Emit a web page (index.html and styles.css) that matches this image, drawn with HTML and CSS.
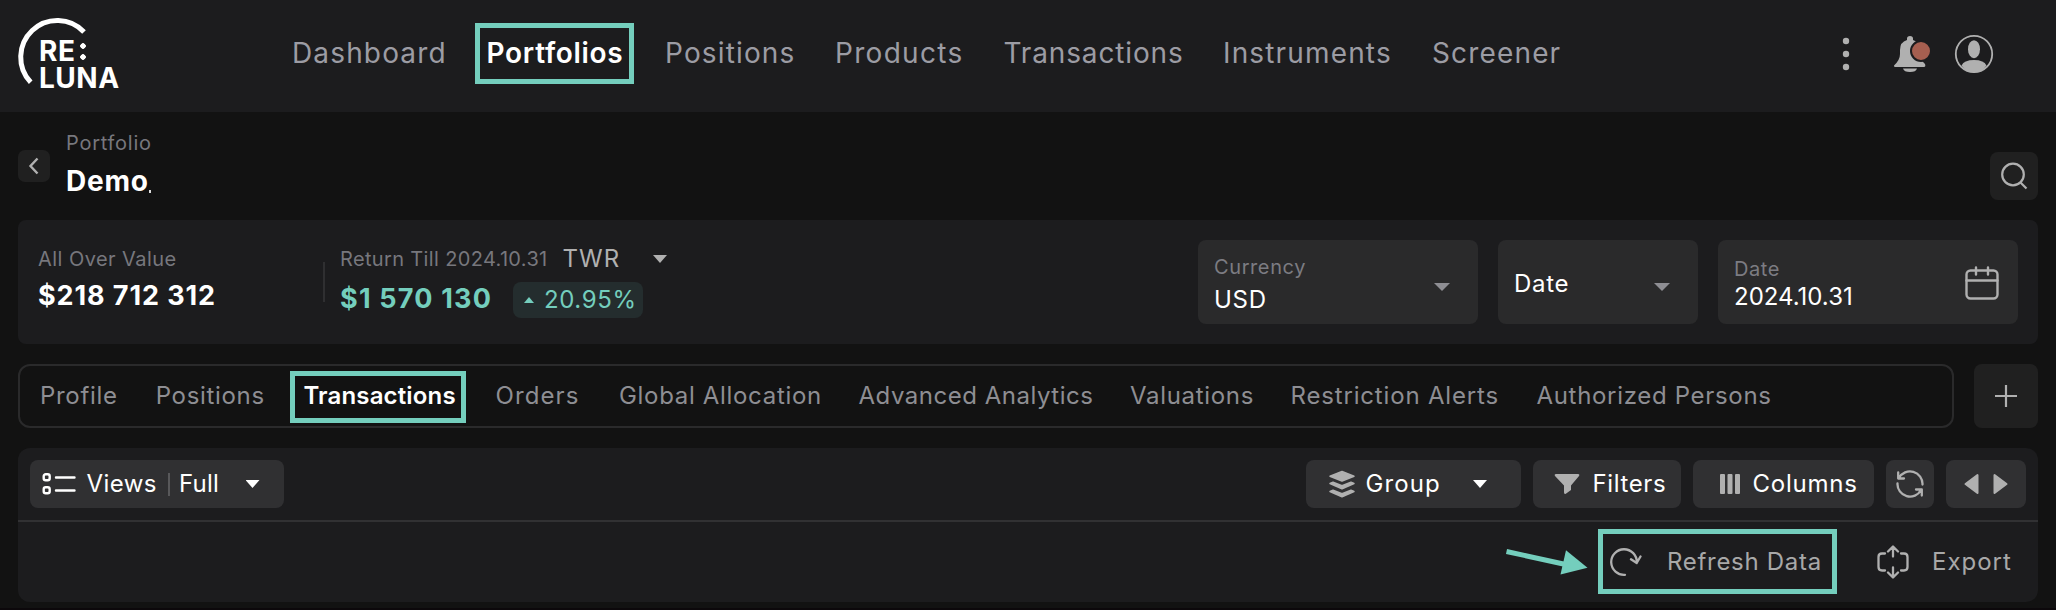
FILE: index.html
```html
<!DOCTYPE html>
<html lang="en">
<head>
<meta charset="utf-8">
<title>Portfolio transactions</title>
<link rel="stylesheet" href="styles.css">
</head>
<body>
<header class="topbar">
  <div class="logo">
    <svg class="logo-arc" width="104" height="76" viewBox="0 0 104 76" fill="none" stroke="#fff" stroke-width="5"><path d="M30.700 70.300A36.500 36.500 0 0 1 84 20"/></svg>
    <div class="logo-text"><span class="logo-re">RE<i class="colon"></i></span><span class="logo-luna">LUNA</span></div>
  </div>
  <nav class="nav">
    <a>Dashboard</a><a class="nav-active">Portfolios</a><a>Positions</a><a>Products</a><a>Transactions</a><a>Instruments</a><a>Screener</a>
  </nav>
  <div class="top-icons">
    <svg class="dots" width="8" height="36" viewBox="0 0 8 36" fill="#b0b0b0"><circle cx="4" cy="5" r="3.2"/><circle cx="4" cy="18" r="3.2"/><circle cx="4" cy="31" r="3.2"/></svg>
    <svg class="bell" width="40" height="40" viewBox="0 0 40 40"><g fill="#b0b0b0"><path d="M17 4.500Q17 2 20 2T23 4.500V6Q30 8 30 16V22Q30 25 35 30Q36 33 34 33H5Q4 33 4 31.500Q10 26 10 20V16Q10 8 17 6Z"/><path d="M13 34.500H27Q26 38 20 38T13 34.500Z"/></g><circle cx="31" cy="17" r="10" fill="#a65f50" stroke="#1c1c1e" stroke-width="2"/></svg>
    <svg class="avatar" width="40" height="40" viewBox="0 0 40 40"><circle cx="20" cy="20" r="18.200" fill="none" stroke="#b0b0b0" stroke-width="1.800"/><ellipse cx="20" cy="15.200" rx="6" ry="9" fill="#b0b0b0"/><path d="M7.500 31.500Q10 26 20 26T32.500 31.500Q28 38.500 20 38.500T7.500 31.500Z" fill="#b0b0b0"/></svg>
  </div>
</header>
<main class="page">
  <section class="heading">
    <button class="back"><svg width="14" height="18" viewBox="0 0 14 18" fill="none" stroke="#b0b0b0" stroke-width="2.400"><path d="M10.500 1.500L3.500 9L10.500 16.500"/></svg></button>
    <div class="title"><span class="crumb">Portfolio</span><h1>Demo<i class="tick"></i></h1></div>
    <button class="search"><svg width="32" height="32" viewBox="0 0 32 32" fill="none" stroke="#b0b0b0" stroke-width="2.200"><circle cx="15" cy="14.500" r="10.800"/><path d="M22.500 22.500L28.500 28.500"/></svg></button>
  </section>
  <section class="summary">
    <div class="stat stat-value"><span class="label">All Over Value</span><strong>$218 712 312</strong></div>
    <i class="stat-rule"></i>
    <div class="stat stat-return">
      <div class="row"><span class="label till">Return Till 2024.10.31</span><span class="twr">TWR</span><i class="caret caret-twr"></i></div>
      <div class="row row-money"><strong class="green">$1 570 130</strong><span class="pill"><i class="up"></i><span class="pct">20.95%</span></span></div>
    </div>
    <div class="fields">
      <div class="field currency"><div><span class="label">Currency</span><span class="val">USD</span></div><i class="caret caret-dim"></i></div>
      <div class="field kind"><span class="val">Date</span><i class="caret caret-dim"></i></div>
      <div class="field date"><div><span class="label">Date</span><span class="val">2024.10.31</span></div>
        <svg width="34" height="34" viewBox="0 0 34 34" fill="none" stroke="#b0b0b0" stroke-width="2.400" stroke-linecap="round"><rect x="1.500" y="4.500" width="31" height="28" rx="4"/><path d="M1.500 14.500H32.500M11 1.500V8.500M23 1.500V8.500"/></svg></div>
    </div>
  </section>
  <section class="tabs-row">
    <nav class="tabs"><a>Profile</a><a>Positions</a><a class="tab-active">Transactions</a><a>Orders</a><a>Global Allocation</a><a>Advanced Analytics</a><a>Valuations</a><a>Restriction Alerts</a><a>Authorized Persons</a></nav>
    <button class="add"><svg width="24" height="24" viewBox="0 0 24 24" stroke="#b0b0b0" stroke-width="2.200"><path d="M12 1V23M1 12H23"/></svg></button>
  </section>
  <section class="table-panel">
    <div class="toolbar">
      <button class="btn views"><svg width="34" height="24" viewBox="0 0 34 24" fill="none" stroke="#fff" stroke-width="2.400"><rect x="1.700" y="2.200" width="6" height="6" rx="2"/><rect x="1.700" y="15.200" width="6" height="6" rx="2"/><path d="M14 5.500H32.500M14 18.500H32.500" stroke-linecap="round"/></svg><span class="t-views">Views</span><i class="sep"></i><span class="t-full">Full</span><i class="caret"></i></button>
      <div class="tools">
        <button class="btn group"><svg width="28" height="28" viewBox="0 0 28 28" fill="#b0b0b0" stroke="#b0b0b0" stroke-width="1.500" stroke-linejoin="round"><path d="M14 1.500L26 6.300L14 11L2 6.300Z"/><path d="M2 13.500L5 12.300L14 15.800L23 12.300L26 13.500L14 18.800Z"/><path d="M2 21.500L5 20.300L14 23.800L23 20.300L26 21.500L14 26.800Z"/></svg><span class="t-group">Group</span><i class="caret"></i></button>
        <button class="btn filters"><svg width="26" height="22" viewBox="0 0 26 22" fill="#b0b0b0"><path d="M2 1H24Q26 1 25 3L17 12.500V17L11.500 21Q10 21 10 19.500V12.500L1 3Q0 1 2 1Z"/></svg><span class="t-filters">Filters</span></button>
        <button class="btn columns"><svg width="20" height="20" viewBox="0 0 20 20" fill="#b0b0b0"><rect width="5" height="20" rx="1"/><rect x="7.500" width="5" height="20" rx="1"/><rect x="15" width="5" height="20" rx="1"/></svg><span class="t-columns">Columns</span></button>
        <button class="btn sync"><svg width="30" height="28" viewBox="0 0 30 28" fill="none" stroke="#b0b0b0" stroke-width="2.300" stroke-linecap="round" stroke-linejoin="round"><path d="M3.200 2.500V8.500H9M4 8A12.500 12.500 0 0 1 27.500 14.500M26.800 25.500V19.500H21M26 20A12.500 12.500 0 0 1 2.500 13.500"/></svg></button>
        <button class="btn arrows"><svg width="44" height="22" viewBox="0 0 44 22" fill="#b0b0b0" stroke="#b0b0b0" stroke-width="2" stroke-linejoin="round"><path d="M13.500 2V20L1.500 11Z"/><path d="M30.500 2V20L42.500 11Z"/></svg></button>
      </div>
    </div>
    <div class="actions">
      <svg class="pointer" width="86" height="30" viewBox="0 0 86 30"><path d="M2.500 4.500L64 18" stroke="#74cebd" stroke-width="5"/><path d="M62 3.300L83.500 20.700L56.500 27.600Z" fill="#74cebd"/></svg>
      <a class="action refresh"><svg width="32" height="30" viewBox="0 0 32 30" fill="none" stroke="#b0b0b0" stroke-width="2.300" stroke-linecap="round" stroke-linejoin="round"><path d="M15 27.800A12.800 12.800 0 1 1 26.800 15.500M21 12.300L26.700 16L30.500 9.500"/></svg><span class="t-refresh">Refresh Data</span></a>
      <a class="action export"><svg width="32" height="34" viewBox="0 0 32 34" fill="none" stroke="#b0b0b0" stroke-width="2.300" stroke-linecap="round" stroke-linejoin="round"><path d="M8 8.500H5Q1.500 8.500 1.500 12V22Q1.500 25.500 5 25.500H8M24 8.500H27Q30.500 8.500 30.500 12V22Q30.500 25.500 27 25.500H24M16 2V11.500M11 6.500L16 1.500L21 6.500M16 32V22.500M11 27.500L16 32.500L21 27.500"/></svg><span class="t-export">Export</span></a>
    </div>
  </section>
</main>
</body>
</html>
```
FILE: styles.css
```css
*, *::after { box-sizing: border-box; }
body { margin: 0; width: 2056px; height: 610px; overflow: hidden; background: #121212; border-bottom: 2px solid #0c080b; color: #fff; font-family: Inter, "Liberation Sans", sans-serif; font-size: 24px; font-weight: 400; line-height: 32px; }
button { border: 0; padding: 0; margin: 0; background: #202020; color: inherit; font: inherit; display: flex; align-items: center; justify-content: center; }
svg { display: block; flex: none; }
i { flex: none; }
a, span, strong { white-space: nowrap; }

.topbar { height: 112px; background: #1c1c1e; display: flex; }
.logo { width: 275px; padding-top: 12px; position: relative; flex: none; }
.logo-arc { position: absolute; left: 0; top: 12px; }
.logo-text { padding: 26px 0 0 39px; display: flex; flex-direction: column; font-weight: 700; font-size: 28px; line-height: 27px; letter-spacing: .500px; }
.logo-re { display: flex; }
.colon { width: 6px; height: 17px; margin: 5px 0 0 5px; background: radial-gradient(circle at 3px 3px, #fff 2.500px, transparent 3px) 0 0 / 6px 11px; }
.nav { display: flex; align-items: center; height: 105px; gap: 41px; padding-left: 17px; font-size: 28px; letter-spacing: 1.150px; color: #9c9ca4; }
.nav a { flex: none; }
.nav a:nth-child(1) { width: 153.500px; }
.nav a:nth-child(2) { width: 137.500px; }
.nav a:nth-child(3) { width: 129px; }
.nav a:nth-child(4) { width: 127.500px; letter-spacing: 1.300px; }
.nav a:nth-child(5) { width: 178.500px; letter-spacing: .850px; }
.nav a:nth-child(6) { width: 168px; }
.nav .nav-active { color: #fff; font-weight: 600; letter-spacing: .700px; position: relative; }
.nav-active::after { content: ""; position: absolute; left: -11.500px; right: -10px; top: -13.500px; height: 61px; border: 5px solid #74cebd; }
.top-icons { margin-left: auto; display: flex; align-items: center; height: 108px; padding-right: 62px; }
.bell { margin: 0 24px 0 40px; }

.page { padding: 0 18px; }
.heading { height: 108px; display: flex; }
.back { width: 32px; height: 32px; margin-top: 38px; border-radius: 7px; }
.title { padding: 19px 0 0 16px; }
.crumb { display: block; font-size: 20px; line-height: 24px; letter-spacing: .750px; color: #77777d; }
h1 { margin: 10px 0 0; font-size: 28px; line-height: 32px; font-weight: 700; letter-spacing: .800px; display: flex; }
.tick { width: 2px; height: 3px; background: #ddd; margin: 25px 0 0; }
.search { width: 48px; height: 48px; margin: 40px 0 0 auto; border-radius: 8px; }

.summary { height: 124px; border-radius: 8px; background: #1c1c1e; display: flex; padding: 20px; }
.label { font-size: 20px; line-height: 24px; letter-spacing: .450px; color: #77777d; }
.till { width: 206.500px; letter-spacing: .350px; }
.stat { display: flex; flex-direction: column; }
.stat-value { width: 285px; padding-top: 7px; }
.stat strong { font-size: 27px; line-height: 32px; font-weight: 700; letter-spacing: .900px; }
.stat-value strong { margin-top: 9px; }
.stat-rule { width: 2px; height: 40px; background: #2f2f31; margin-top: 22px; }
.stat-return { padding: 4px 0 0 15px; }
.row { display: flex; align-items: center; height: 30px; }
.row-money { height: 36px; margin-top: 8px; }
.twr { color: #b0b0b0; width: 57.500px; letter-spacing: 1px; margin-left: 16px; }
.caret { width: 14px; height: 8px; background: #fff; clip-path: polygon(0 0, 100% 0, 50% 100%); }
.caret-twr { background: #b0b0b0; margin-left: 33px; }
.green, .pill { color: #74cebd; }
.row .green { width: 153px; margin-top: -3px; letter-spacing: 1.200px; }
.pill { height: 36px; width: 130px; margin-left: 20px; border-radius: 8px; background: #242d2e; display: flex; align-items: center; padding-left: 11px; letter-spacing: .600px; }
.up { width: 10px; height: 6px; background: #74cebd; clip-path: polygon(50% 0, 100% 100%, 0 100%); margin-right: 10px; }
.fields { display: flex; gap: 20px; margin-left: auto; }
.field { height: 84px; border-radius: 8px; background: #2a2a2b; display: flex; align-items: center; justify-content: space-between; padding: 0 28px 0 16px; }
.field > div { display: flex; flex-direction: column; }
.field .label { letter-spacing: .600px; color: #7c7c82; }
.val { letter-spacing: .700px; }
.currency { width: 280px; padding-top: 7px; }
.currency .val { margin-top: 5px; }
.currency .caret { margin-top: 3px; }
.kind { width: 200px; padding-top: 4px; }
.kind .caret { margin-top: 6px; }
.date { width: 300px; padding-top: 6px; padding-right: 19px; }
.date .val { letter-spacing: 0; }
.date svg { margin-top: -5px; }
.caret-dim { background: #8e8e93; width: 16px; }

.tabs-row { display: flex; gap: 20px; margin-top: 20px; }
.tabs { width: 1936px; height: 64px; border: 2px solid #2a2a2b; border-radius: 12px; display: flex; align-items: center; gap: 40px; padding-left: 20px; letter-spacing: .680px; color: #8e8e93; }
.tabs a { flex: none; }
.tabs a:nth-child(1) { width: 75.700px; }
.tabs a:nth-child(2) { width: 107.800px; }
.tabs a:nth-child(3) { width: 152px; }
.tabs a:nth-child(4) { width: 83.500px; letter-spacing: 1.100px; }
.tabs a:nth-child(5) { width: 199.500px; }
.tabs a:nth-child(6) { width: 231.500px; letter-spacing: .520px; }
.tabs a:nth-child(7) { width: 120.500px; }
.tabs a:nth-child(8) { width: 206px; letter-spacing: .830px; }
.tabs .tab-active { color: #fff; font-weight: 600; letter-spacing: .150px; position: relative; }
.tab-active::after { content: ""; position: absolute; left: -13.500px; right: -10.500px; top: -9px; height: 52px; border: 5px solid #74cebd; }
.add { width: 64px; height: 64px; border-radius: 8px; }

.table-panel { height: 154px; margin-top: 20px; border-radius: 12px; background: #1c1c1e; }
.toolbar { height: 74px; border-bottom: 2px solid #313133; padding: 12px; display: flex; justify-content: space-between; }
.btn { height: 48px; border-radius: 8px; background: #303032; justify-content: flex-start; letter-spacing: .600px; }
.btn span { text-align: left; }
.tools { display: flex; gap: 12px; }
.views { width: 254px; padding-left: 12px; }
.sep { width: 2px; height: 23px; background: #58585a; margin: 0 9px 0 11.500px; }
.t-views { width: 70px; margin-left: 10.500px; letter-spacing: .400px; }
.t-full { width: 40px; letter-spacing: .200px; }
.views .caret { margin-left: 26.500px; }
.group { width: 215px; padding-left: 22px; }
.t-group { width: 76px; margin-left: 9.500px; letter-spacing: 1.100px; }
.group .caret { margin-left: 31.500px; }
.filters { width: 148px; padding-left: 21px; }
.t-filters { margin-left: 12.500px; }
.columns { width: 181px; padding-left: 27px; }
.t-columns { margin-left: 12.500px; letter-spacing: .750px; }
.sync, .arrows { justify-content: center; }
.sync { width: 48px; }
.arrows { width: 80px; }
.actions { height: 80px; display: flex; justify-content: flex-end; align-items: center; color: #a8a8a8; padding: 0 28px 1px 0; }
.action { display: flex; align-items: center; }
.pointer { margin-right: 8px; }
.refresh { width: 239px; height: 65px; border: 5px solid #74cebd; padding-left: 7px; }
.t-refresh { margin-left: 25px; letter-spacing: .700px; }
.export { margin-left: 40px; }
.t-export { width: 78px; margin-left: 23px; letter-spacing: 1px; }
```
